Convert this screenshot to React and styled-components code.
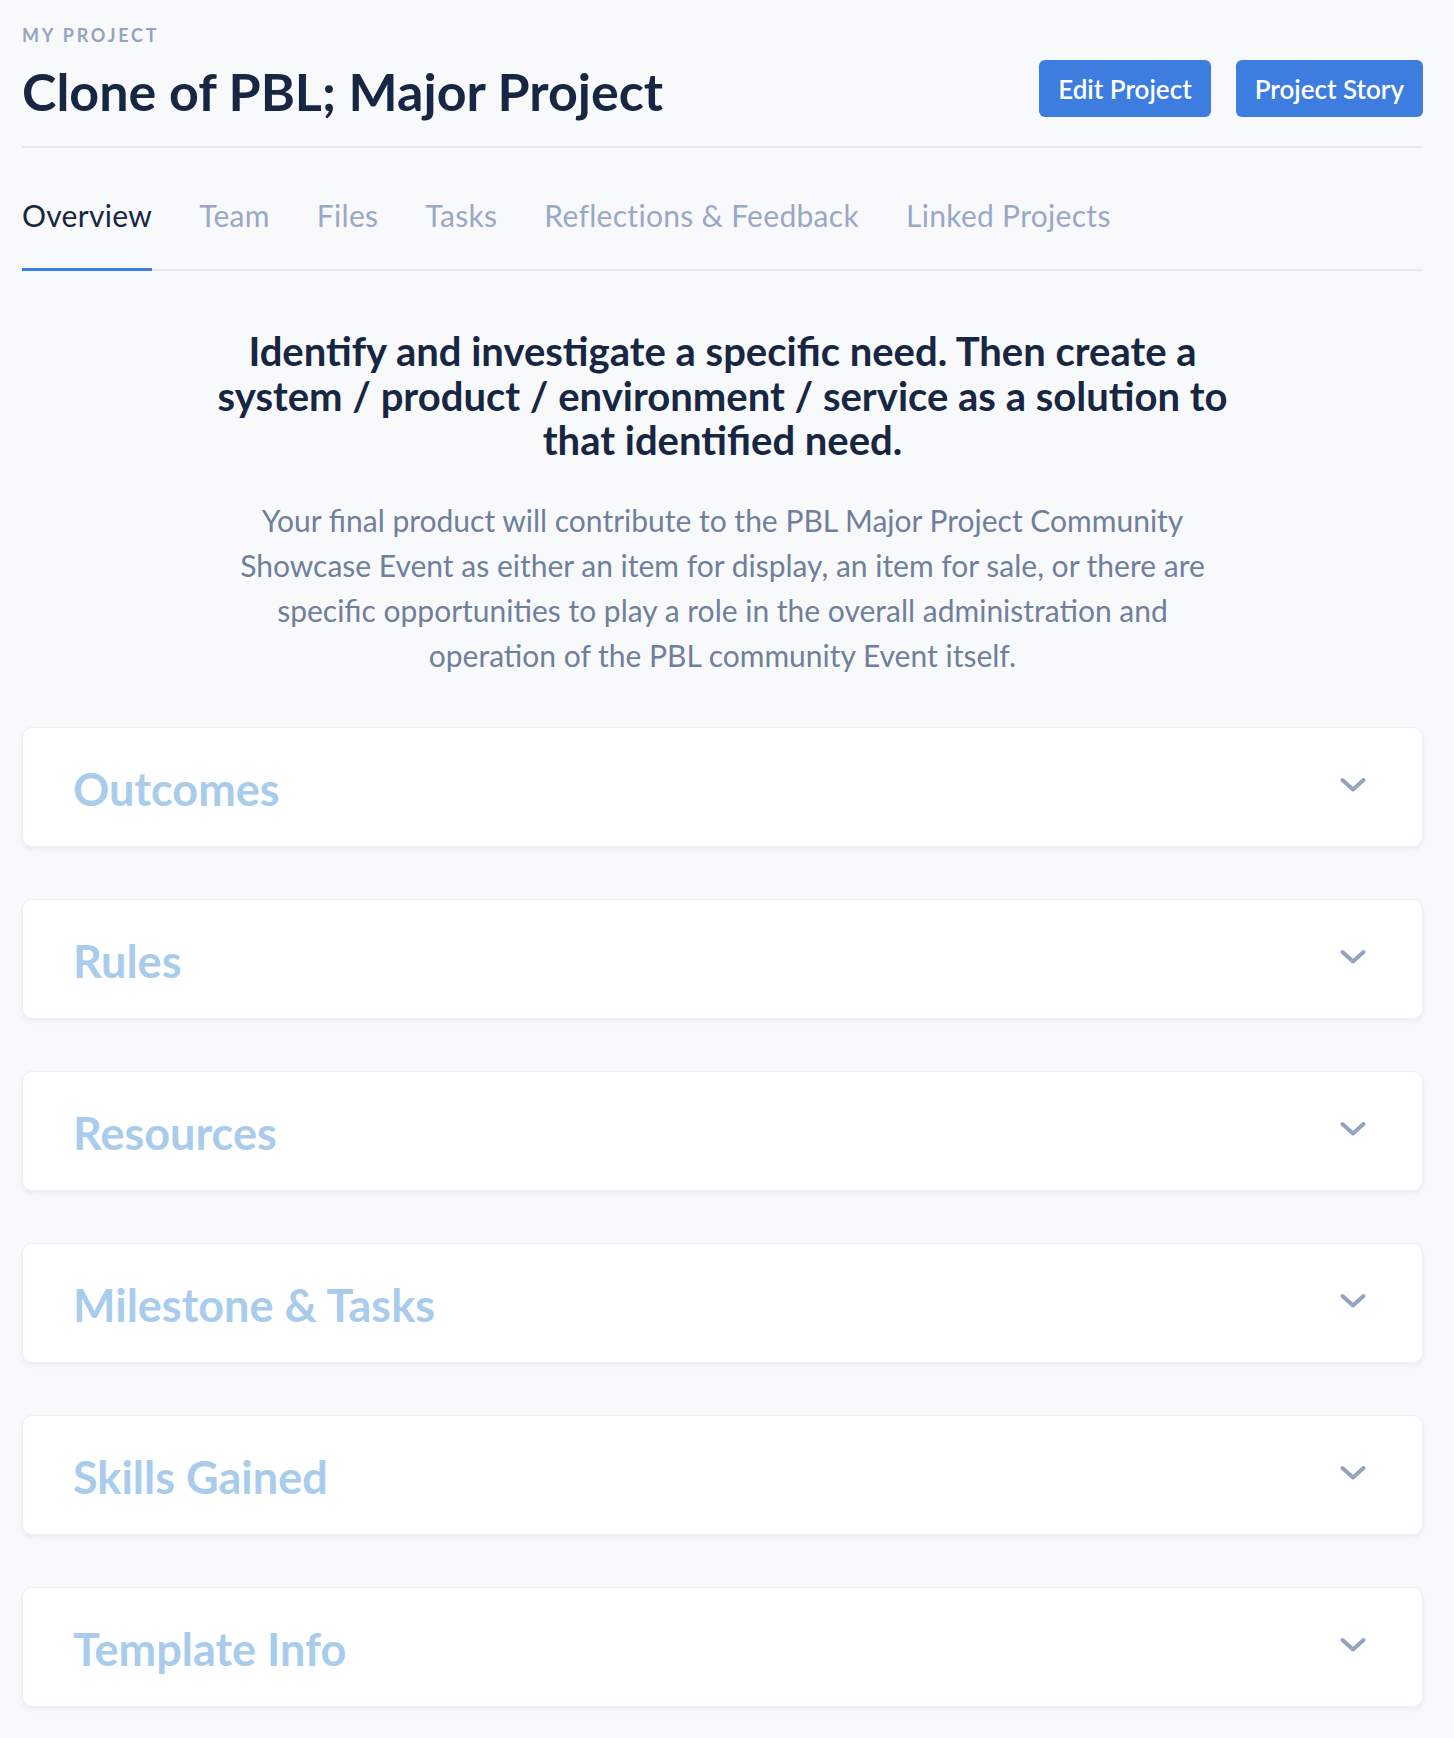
import React from 'react'
import styled, { createGlobalStyle } from 'styled-components'

const GlobalStyle = createGlobalStyle`
    body {
        margin: 0;
        background: #f8f9fb;
        font-family: Lato, "Open Sans", sans-serif;
    }
`
const Page = styled.div`
    padding: 24px 31px 31px 22px;
`
const Header = styled.div`
    display: flex;
    justify-content: space-between;
    align-items: flex-start;
    padding-bottom: 26px;
    border-bottom: 2px solid #e3e9f2;
`
const Label = styled.div`
    font-size: 18px;
    line-height: 22px;
    font-weight: 700;
    letter-spacing: 2.8px;
    color: #94a3c0;
    text-transform: uppercase;
`
const Title = styled.h1`
    margin: 17px 0 0;
    font-size: 52px;
    line-height: 57px;
    font-weight: 700;
    color: #172642;
`
const Actions = styled.div`
    display: flex;
    gap: 25px;
    margin-top: 36px;
`
const Button = styled.button`
    height: 57px;
    padding: 0 19px;
    border: none;
    border-radius: 6px;
    background: #3d7ddf;
    color: white;
    font-family: inherit;
    font-size: 26px;
    font-weight: 600;
`
const Tabs = styled.div`
    display: flex;
    gap: 47px;
    border-bottom: 2px solid #e3e9f2;
    margin-top: 49px;
`
const Tab = styled.div`
    padding-bottom: 34px;
    font-size: 30px;
    line-height: 37px;
    letter-spacing: 0.3px;
    color: ${p => (p.active ? '#172642' : '#98a8c6')};
    border-bottom: 3px solid ${p => (p.active ? '#3d7ddf' : 'transparent')};
    margin-bottom: -2px;
`
const Intro = styled.div`
    display: flex;
    flex-direction: column;
    align-items: center;
    margin-top: 58px;
    text-align: center;
`
const Lead = styled.h2`
    max-width: 1045px;
    margin: 0;
    font-size: 40px;
    line-height: 44.5px;
    font-weight: 700;
    color: #172642;
`
const Text = styled.p`
    max-width: 1000px;
    margin: 35px 0 0;
    font-size: 30px;
    line-height: 45px;
    color: #6f7f9c;
`
const Sections = styled.div`
    display: flex;
    flex-direction: column;
    gap: 52px;
    margin-top: 49px;
`
const Card = styled.div`
    height: 120px;
    display: flex;
    align-items: center;
    justify-content: space-between;
    padding: 0 56px 0 50px;
    background: white;
    border: 1px solid #ebeff6;
    border-radius: 10px;
    box-shadow: 0 3px 4px rgba(210, 220, 235, 0.35);
    box-sizing: border-box;
`
const CardTitle = styled.div`
    font-size: 45px;
    font-weight: 700;
    color: #a9cced;
    margin-top: 4px;
`
const Chevron = () => (
    <svg width="26" height="16" viewBox="0 0 26 16" fill="none" style={{ marginTop: -4 }}>
        <path d="M2.5 3 L13 12.5 L23.5 3" stroke="#94a3c0" strokeWidth="4" strokeLinecap="round" strokeLinejoin="round" />
    </svg>
)

const tabs = ['Overview', 'Team', 'Files', 'Tasks', 'Reflections & Feedback', 'Linked Projects']
const sections = ['Outcomes', 'Rules', 'Resources', 'Milestone & Tasks', 'Skills Gained', 'Template Info']

const App = () => {
    return (
        <Page>
            <GlobalStyle />
            <Header>
                <div>
                    <Label>My Project</Label>
                    <Title>Clone of PBL; Major Project</Title>
                </div>
                <Actions>
                    <Button>Edit Project</Button>
                    <Button>Project Story</Button>
                </Actions>
            </Header>
            <Tabs>
                {tabs.map((t, i) => (
                    <Tab key={t} active={i === 0}>{t}</Tab>
                ))}
            </Tabs>
            <Intro>
                <Lead>
                    Identify and investigate a specific need. Then create a system / product / environment / service as a solution to that identified need.
                </Lead>
                <Text>
                    Your final product will contribute to the PBL Major Project Community Showcase Event as either an item for display, an item for sale, or there are specific opportunities to play a role in the overall administration and operation of the PBL community Event itself.
                </Text>
            </Intro>
            <Sections>
                {sections.map(s => (
                    <Card key={s}>
                        <CardTitle>{s}</CardTitle>
                        <Chevron />
                    </Card>
                ))}
            </Sections>
        </Page>
    )
}

export default App
